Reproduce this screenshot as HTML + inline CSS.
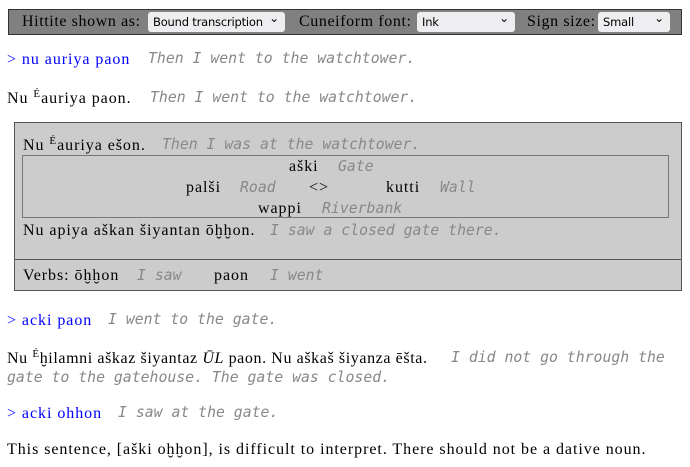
<!DOCTYPE html>
<html><head><meta charset="utf-8"><style>
body{margin:0;width:690px;height:467px;background:#fff;position:relative;font-family:"Liberation Serif",serif;font-size:16px;letter-spacing:0.95px;color:#000;overflow:hidden}
.a{position:absolute;white-space:nowrap;line-height:20px}
.t{font-family:"DejaVu Sans Mono","Liberation Mono",monospace;font-style:italic;color:#888;font-size:14.8px;letter-spacing:0}
.l{color:#00f}
sup{font-size:11px;vertical-align:6px;line-height:0}
.bar{position:absolute;left:8px;top:9px;width:672px;height:24px;background:#808080;border:1px solid #333}
.bar span{position:absolute;top:2px;font-size:16px;letter-spacing:0.6px;color:#000;white-space:nowrap;line-height:20px}
.sel{position:absolute;top:2px;height:20px;background:#eeeef0;border-radius:3px;font-family:"DejaVu Sans","Liberation Sans",sans-serif;font-size:11.5px;letter-spacing:-0.2px;line-height:20px;padding-left:5px;box-sizing:border-box}
.sel:after{content:"⌄";position:absolute;right:6px;top:-4px;font-size:12px}
.box{position:absolute;background:#ccc;border:1px solid #555;box-sizing:border-box}
</style></head><body>
<div class="bar">
<span style="left:13px">Hittite shown as:</span>
<div class="sel" style="left:139px;width:137px">Bound transcription</div>
<span style="left:290px">Cuneiform font:</span>
<div class="sel" style="left:408px;width:98px">Ink</div>
<span style="left:518px">Sign size:</span>
<div class="sel" style="left:589px;width:72px">Small</div>
</div>
<div class="a l" style="left:7px;top:50px">&gt; nu auriya paon</div>
<div class="a t" style="left:148px;top:49px">Then I went to the watchtower.</div>
<div class="a" style="left:7px;top:89px">Nu <sup>É</sup>auriya paon.</div>
<div class="a t" style="left:150px;top:88px">Then I went to the watchtower.</div>

<div class="box" style="left:14px;top:122px;width:668px;height:138px"></div>
<div class="a" style="left:23px;top:136px">Nu <sup>É</sup>auriya ešon.</div>
<div class="a t" style="left:162px;top:135px">Then I was at the watchtower.</div>
<div style="position:absolute;left:22px;top:155px;width:647px;height:63px;border:1px solid #777;box-sizing:border-box"></div>
<div class="a" style="left:289px;top:157px">aški</div>
<div class="a t" style="left:338px;top:157px">Gate</div>
<div class="a" style="left:186px;top:178px">palši</div>
<div class="a t" style="left:240px;top:178px">Road</div>
<div class="a" style="left:309px;top:178px">&lt;&gt;</div>
<div class="a" style="left:386px;top:178px">kutti</div>
<div class="a t" style="left:440px;top:178px">Wall</div>
<div class="a" style="left:258px;top:199px">wappi</div>
<div class="a t" style="left:322px;top:199px">Riverbank</div>
<div class="a" style="left:23px;top:221px">Nu apiya aškan šiyantan ōḫḫon.</div>
<div class="a t" style="left:270px;top:221px">I saw a closed gate there.</div>

<div class="box" style="left:14px;top:259px;width:668px;height:32px"></div>
<div class="a" style="left:23px;top:266px">Verbs: ōḫḫon</div>
<div class="a t" style="left:137px;top:266px">I saw</div>
<div class="a" style="left:214px;top:266px">paon</div>
<div class="a t" style="left:270px;top:266px">I went</div>

<div class="a l" style="left:7px;top:311px">&gt; acki paon</div>
<div class="a t" style="left:108px;top:310px">I went to the gate.</div>
<div class="a" style="left:7px;top:349px;letter-spacing:0.6px">Nu <sup>É</sup>ḫilamni aškaz šiyantaz <i>ŪL</i> paon. Nu aškaš šiyanza ēšta.</div>
<div class="a t" style="left:451px;top:348px">I did not go through the</div>
<div class="a t" style="left:7px;top:368px">gate to the gatehouse. The gate was closed.</div>
<div class="a l" style="left:7px;top:404px">&gt; acki ohhon</div>
<div class="a t" style="left:118px;top:403px">I saw at the gate.</div>
<div class="a" style="left:7px;top:440px">This sentence, [aški oḫḫon], is difficult to interpret. There should not be a dative noun.</div>
</body></html>
